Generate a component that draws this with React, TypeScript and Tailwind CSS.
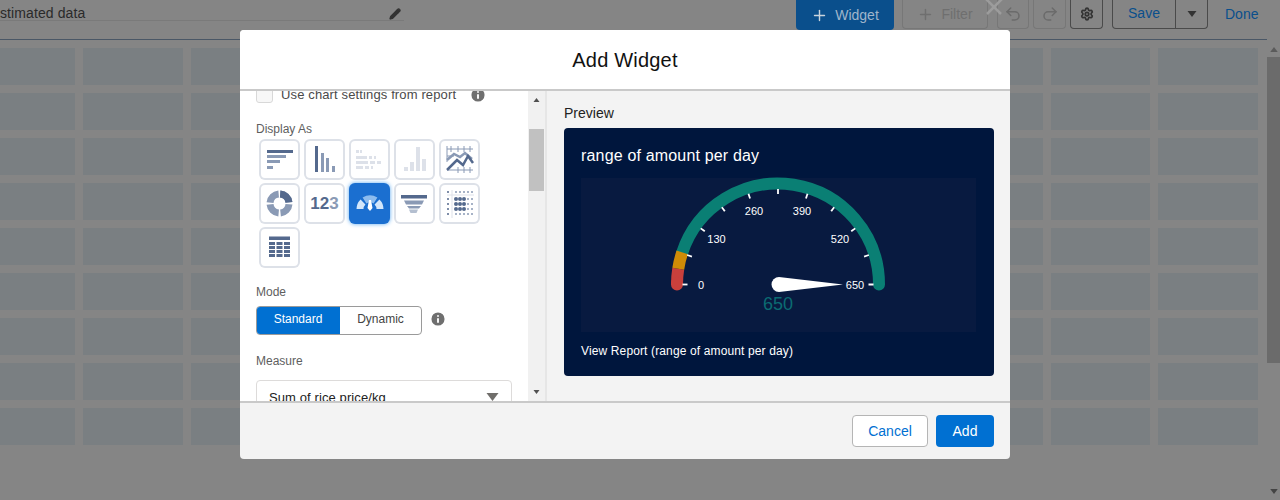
import { FC } from "react";
import { Plus, Pencil, Undo2, Redo2, Settings, Info } from "lucide-react";

const sans = { fontFamily: '"Liberation Sans", Arial, sans-serif' };

const Caret: FC<{ className: string }> = ({ className }) => (
  <svg viewBox="0 0 12 8" className={className}>
    <path d="M0 0h12L6 8z" fill="currentColor" />
  </svg>
);

const dark = "#54698d";
const mid = "#8a9ab5";
const light = "#dde1e9";

const ChartIcon: FC<{ kind: number }> = ({ kind }) => {
  if (kind === 0)
    return (
      <svg viewBox="0 0 41 41" className="w-[41px] h-[41px]">
        <rect x="8" y="11" width="26" height="3" fill={dark} />
        <rect x="8" y="16" width="19" height="3" fill={mid} />
        <rect x="8" y="21" width="13" height="3" fill={mid} />
        <rect x="8" y="27" width="6" height="3" fill={mid} />
      </svg>
    );
  if (kind === 1)
    return (
      <svg viewBox="0 0 41 41" className="w-[41px] h-[41px]">
        <rect x="11" y="7" width="3" height="26" fill={dark} />
        <rect x="17" y="14" width="3" height="19" fill={mid} />
        <rect x="22" y="19" width="3" height="14" fill={mid} />
        <rect x="28" y="27" width="3" height="6" fill={mid} />
      </svg>
    );
  if (kind === 2)
    return (
      <svg viewBox="0 0 41 41" className="w-[41px] h-[41px]">
        <path d="M7 11h3v3H7zM11 11h2v3h-2zM7 17h11v3H7zM20 17h3v3h-3zM25 17h2v3h-2zM7 22h12v3H7zM21 22h5v3h-5zM28 22h4v3h-4zM7 27h7v3H7zM16 27h4v3h-4zM22 27h2v3h-2z" fill={light} />
      </svg>
    );
  if (kind === 3)
    return (
      <svg viewBox="0 0 41 41" className="w-[41px] h-[41px]">
        <path d="M10 28h4v4h-4zM16 23h4v9h-4zM22 8h4v24h-4zM28 20h4v12h-4z" fill={light} />
      </svg>
    );
  if (kind === 4)
    return (
      <svg viewBox="0 0 41 41" className="w-[41px] h-[41px]">
        <path d="M8 10h26M8 31h26M8 17h7M12 7v6M19 7v6M25 7v6M31 7v6M19 28v6M25 28v6M31 28v6M8 7v16" stroke={mid} strokeWidth="1" fill="none" />
        <path d="M8 21l7-6 6 3 5-4 7 6" stroke={mid} strokeWidth="2.5" fill="none" />
        <path d="M8 31l10-10 6 5 5-9 5 7" stroke={dark} strokeWidth="2.5" fill="none" />
      </svg>
    );
  if (kind === 5)
    return (
      <svg viewBox="0 0 41 41" className="w-[41px] h-[41px]" fill="none" strokeWidth="7">
        <circle cx="20.5" cy="20.5" r="9.5" stroke={mid} strokeDasharray="13 1.92" transform="rotate(-86 20.5 20.5)" />
        <circle cx="20.5" cy="20.5" r="9.5" stroke={dark} strokeDasharray="13 46.7" transform="rotate(-86 20.5 20.5)" />
      </svg>
    );
  if (kind === 6)
    return (
      <span className="text-[17px] font-bold" style={sans}>
        <span className="text-[#54698d]">12</span>
        <span className="text-[#8a9ab5]">3</span>
      </span>
    );
  if (kind === 7)
    return (
      <svg viewBox="0 0 41 41" className="w-[41px] h-[41px]" fill="none" strokeWidth="7">
        <path d="M11 26a10 10 0 0 1 3-7" stroke="#d3e6fa" />
        <path d="M15.5 17.5a10 10 0 0 1 11 0" stroke="#8dbcee" />
        <path d="M28 19a10 10 0 0 1 3 7" stroke="#d3e6fa" />
        <path d="M20 17h2l1.5 8-2.5 3-2.5-3z" fill="#fff" />
      </svg>
    );
  if (kind === 8)
    return (
      <svg viewBox="0 0 41 41" className="w-[41px] h-[41px]">
        <path d="M7 12h26v3.5H7z" fill={dark} />
        <path d="M10 17.5h20l-2 4H12zM13 23h14l-2 2.5H15z" fill={mid} />
        <path d="M15 26.5h9l-1.5 3.5h-6z" fill="#b4bfd0" />
      </svg>
    );
  if (kind === 9)
    return (
      <svg viewBox="0 0 41 41" className="w-[41px] h-[41px]">
        <path d="M8 12h27M13 7v28" stroke={light} strokeWidth="1" />
        {[9, 16, 21, 26, 31].flatMap((y) =>
          [9, 17, 21, 25, 29, 33].map((x, i) => (
            <circle
              key={`${x}-${y}`}
              cx={x}
              cy={y}
              r={i > 0 && i < 4 && y > 10 && y < 28 ? 2 : 1}
              fill={i === 0 || (i < 4 && y > 10 && y < 28) ? dark : mid}
            />
          ))
        )}
      </svg>
    );
  return (
    <svg viewBox="0 0 41 41" className="w-[41px] h-[41px]">
      <rect x="10" y="9.5" width="21" height="3.5" fill={dark} />
      {[15, 19, 23, 27].flatMap((y) =>
        [10, 17.5, 25].map((x) => <rect key={`${x}-${y}`} x={x} y={y} width="6" height="3" fill={dark} />)
      )}
    </svg>
  );
};

const Gauge: FC = () => {
  const cx = 100;
  const cy = 106.5;
  const r = 101;
  const pt = (deg: number, rad: number) => {
    const a = (deg * Math.PI) / 180;
    return { x: cx - rad * Math.cos(a), y: cy - rad * Math.sin(a) };
  };
  const arc = (from: number, to: number) => {
    const a = pt(from, r);
    const b = pt(to, r);
    return `M${a.x} ${a.y}A${r} ${r} 0 0 1 ${b.x} ${b.y}`;
  };
  const labels = [
    { t: "0", x: 23, y: 106.5 },
    { t: "130", x: 38.5, y: 61 },
    { t: "260", x: 76, y: 33 },
    { t: "390", x: 124, y: 33 },
    { t: "520", x: 162, y: 61 },
    { t: "650", x: 177, y: 106.5 },
  ];
  return (
    <svg viewBox="0 0 200 154" className="w-[214px] h-[154px] overflow-visible" style={sans}>
      <path d={arc(18, 180)} stroke="#0a7f74" strokeWidth="12" fill="none" strokeLinecap="round" />
      <path d={arc(0, 9)} stroke="#c9403c" strokeWidth="12" fill="none" />
      <path d={arc(0, 1)} stroke="#c9403c" strokeWidth="12" fill="none" strokeLinecap="round" />
      <path d={arc(9, 18.5)} stroke="#cf8b06" strokeWidth="12" fill="none" />
      {Array.from({ length: 11 }, (_, i) => {
        const a = pt(i * 18, 95.5);
        const b = pt(i * 18, 90.5);
        return <line key={i} x1={a.x} y1={a.y} x2={b.x} y2={b.y} stroke="#fff" strokeWidth="1.8" />;
      })}
      {labels.map((l) => (
        <text key={l.t} x={l.x} y={l.y + 4} fontSize="11" fill="#fff" textAnchor="middle">
          {l.t}
        </text>
      ))}
      <path d="M101 99L165 106.5L101 114A7.5 7.5 0 0 1 101 99Z" fill="#fff" />
      <text x="100" y="132" fontSize="18" fill="#0b6b72" textAnchor="middle">
        650
      </text>
    </svg>
  );
};

const App: FC = () => {
  return (
    <div className="relative w-[1280px] h-[500px] overflow-hidden bg-[#858585] flex" style={sans}>
      <div className="w-[1267px] flex flex-col">
        <div className="h-10 border-b border-[#4a5766] flex items-start shrink-0">
          <div className="w-[404px] h-[21px] border-b border-[#7a7a7a] flex items-center justify-between pr-[3px] pt-[7px] text-[14px] tracking-[0.1px] text-[#2a2a2a]">
            <span>stimated data</span>
            <Pencil size={12} strokeWidth={2.5} className="text-[#333]" fill="#333" />
          </div>
          <button className="ml-[392px] w-[98px] h-[30px] rounded-b bg-[#0a4f8c] text-[#9fb5cb] text-[14px] flex items-center justify-center gap-[7px]">
            <Plus size={17} strokeWidth={2} className="text-[#c9d3dc]" />
            Widget
          </button>
          <button className="ml-2 w-[86px] h-[29px] rounded-b border border-t-0 border-[#777] text-[#6f6f6f] text-[14px] flex items-center justify-center gap-[7px]">
            <Plus size={17} />
            Filter
          </button>
          <button className="ml-[9px] w-[32px] h-[29px] rounded-b border border-t-0 border-[#777] flex items-center justify-center text-[#6b6b6b]">
            <Undo2 size={18} />
          </button>
          <button className="ml-[4px] w-[33px] h-[29px] rounded-b border border-t-0 border-[#777] flex items-center justify-center text-[#6b6b6b]">
            <Redo2 size={18} />
          </button>
          <button className="ml-[4px] w-[33px] h-[29px] rounded-b border border-t-0 border-[#4a4a4a] flex items-center justify-center text-[#333]">
            <Settings size={14} strokeWidth={3} />
          </button>
          <div className="ml-[9px] w-[96px] h-[29px] rounded-b border border-t-0 border-[#4a4a4a] flex text-[14px] text-[#0a4f8c]">
            <span className="w-[63px] pb-px border-r border-[#4a4a4a] flex items-center justify-center">Save</span>
            <span className="flex-1 flex items-center justify-center text-[#333]">
              <Caret className="w-[10px] h-[6px]" />
            </span>
          </div>
          <span className="ml-[17px] mt-[4px] text-[14px] text-[#0a4f8c]">Done</span>
        </div>
        <div className="grid grid-cols-[75px_repeat(11,99.55px)] gap-x-2 gap-y-2 pt-2">
          {Array.from({ length: 108 }, (_, i) => (
            <div key={i} className="h-[37px] bg-[#7a7f82]" />
          ))}
        </div>
      </div>

      <div className="w-[13px] flex flex-col items-center pt-[47px]">
        <Caret className="w-[8px] h-[5px] rotate-180 text-[#5b5b5b]" />
        <div className="mt-[5px] w-full h-[306px] bg-[#6b6b6b]" />
        <Caret className="mt-[126px] w-[8px] h-[5px] text-[#444]" />
      </div>

      <svg viewBox="0 0 18 15" className="absolute left-[985px] top-0 w-[18px] h-[15px]">
        <path d="M1 -1L16 14M17 -1L2 14" stroke="#9c9c9c" strokeWidth="2.5" />
      </svg>

      <div className="absolute left-[240px] top-[30px] w-[770px] h-[429px] rounded flex flex-col overflow-hidden bg-[#f3f3f3]">
        <div className="h-[61px] shrink-0 bg-white border-b-2 border-[#c9c9c9] flex items-center justify-center text-[20px] tracking-[0.2px] text-[#111]">
          Add Widget
        </div>

        <div className="h-[310px] flex shrink-0 bg-[#f3f3f3]">
          <div className="w-[288px] bg-white overflow-hidden shrink-0 pl-4 text-[12px] text-[#5e5e5e]">
            <div className="-mt-[5px] h-[17px] flex items-center">
              <span className="w-[17px] h-[17px] rounded-[3px] border border-[#d8d8d8] bg-[#f7f7f7]" />
              <span className="ml-2 text-[13px] tracking-[0.13px] text-[#4a4a4a]">Use chart settings from report</span>
              <Info size={18} className="ml-[13px] text-white" fill="#6f6f6f" strokeWidth={2.5} />
            </div>
            <div className="mt-[19px] leading-[14px]">Display As</div>
            <div className="mt-[3px] ml-[3px] grid grid-cols-[repeat(5,41px)] auto-rows-[41px] gap-x-1 gap-y-[3px]">
              {Array.from({ length: 11 }, (_, i) => (
                <div
                  key={i}
                  className={
                    i === 7
                      ? "rounded-[6px] bg-[#1b6fd0] shadow-[0_0_4px_#5aa9f0] flex items-center justify-center"
                      : "rounded-[6px] shadow-[inset_0_0_0_2px_#dde1e8] bg-white flex items-center justify-center"
                  }
                >
                  <ChartIcon kind={i} />
                </div>
              ))}
            </div>
            <div className="mt-[17px] leading-[14px]">Mode</div>
            <div className="mt-[7px] flex items-center">
              <div className="w-[166px] h-[29px] rounded border border-[#9a9a9a] flex overflow-hidden text-[12px]">
                <span className="w-[84px] -ml-px -my-px pb-[3px] bg-[#0070d2] text-white flex items-center justify-center">Standard</span>
                <span className="flex-1 pb-[3px] text-[#444] flex items-center justify-center">Dynamic</span>
              </div>
              <Info size={18} className="ml-[7px] -mt-[3px] text-white" fill="#6f6f6f" strokeWidth={2.5} />
            </div>
            <div className="mt-[19px] leading-[14px]">Measure</div>
            <div className="mt-[12px] w-[256px] h-[40px] rounded border border-[#dddbda] flex items-start justify-between pl-3 pr-3 pt-[7px] text-[13px] tracking-[0.1px] text-[#222]">
              <span>Sum of rice price/kg</span>
              <Caret className="w-[13px] h-[8px] mt-[5px] text-[#706e6b]" />
            </div>
          </div>

          <div className="w-[17px] bg-[#f1f1f1] shrink-0 flex flex-col items-center pt-[7px]">
            <Caret className="w-[7px] h-[4px] rotate-180 text-[#505050]" />
            <div className="mt-[27px] w-[15px] h-[62px] bg-[#c1c1c1]" />
            <div className="flex-1" />
            <Caret className="w-[7px] h-[4px] text-[#505050] mb-[7px]" />
          </div>

          <div className="flex-1 border-l-2 border-[#e6e6e6] pl-[17px] pt-[14px]">
            <div className="text-[14px] leading-4 text-[#222]">Preview</div>
            <div className="mt-[7px] w-[430px] h-[248px] rounded bg-[#00163d] text-white pl-[17px] pr-[18px] flex flex-col">
              <div className="mt-[18px] text-[16px] tracking-[0.17px] leading-[19px]">range of amount per day</div>
              <div className="mt-[13px] h-[154px] pr-px bg-[#081a40] flex justify-center">
                <Gauge />
              </div>
              <div className="mt-[12px] text-[12px] tracking-[0.13px] leading-[15px]">View Report (range of amount per day)</div>
            </div>
          </div>
        </div>

        <div className="flex-1 border-t-2 border-[#c9c9c9] flex items-start justify-end gap-2 pt-3 pr-4 text-[14px]">
          <button className="w-[76px] h-8 rounded border border-[#b5b5b5] bg-white text-[#0070d2]">Cancel</button>
          <button className="w-[58px] h-8 rounded bg-[#0070d2] text-white">Add</button>
        </div>
      </div>
    </div>
  );
};

export default App;
